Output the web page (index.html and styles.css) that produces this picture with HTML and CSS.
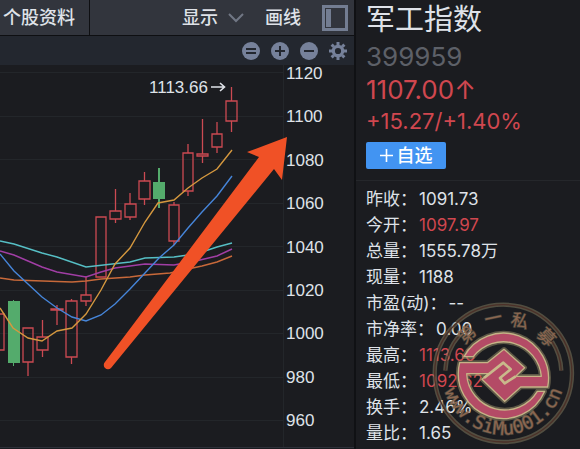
FILE: index.html
```html
<!DOCTYPE html>
<html lang="zh-CN">
<head>
  <meta charset="UTF-8">
  <meta name="viewport" content="width=device-width, initial-scale=1.0">
  <title>军工指数 399959</title>
  <link rel="stylesheet" href="styles.css">
</head>
<body>
  <main class="chart-panel">
    <nav class="toolbar">
      <button type="button" class="tool tab">个股资料</button>
      <button type="button" class="tool display">显示
        <svg width="16" height="10" viewBox="0 0 16 10"><path d="M1 1l7 7 7-7" fill="none" stroke="#717785" stroke-width="2"/></svg>
      </button>
      <button type="button" class="tool draw">画线</button>
      <button type="button" class="tool side" aria-label="侧栏">
        <svg width="26" height="26" viewBox="0 0 26 26"><path d="M1.5 1.5h23v23h-23z" fill="none" stroke="#737d92" stroke-width="3"/><path d="M4 4h5v18H4z" fill="#737d92"/></svg>
      </button>
    </nav>

    <div class="subbar">
      <button type="button" class="tool" aria-label="还原">
        <svg width="18" height="18" viewBox="0 0 18 18"><circle cx="9" cy="9" r="9" fill="#76819a"/><path d="M4 7h10M4 11h10" stroke="#23272f" stroke-width="2"/></svg>
      </button>
      <button type="button" class="tool" aria-label="放大">
        <svg width="18" height="18" viewBox="0 0 18 18"><circle cx="9" cy="9" r="9" fill="#76819a"/><path d="M4 9h10M9 4v10" stroke="#23272f" stroke-width="2"/></svg>
      </button>
      <button type="button" class="tool" aria-label="缩小">
        <svg width="18" height="18" viewBox="0 0 18 18"><circle cx="9" cy="9" r="9" fill="#76819a"/><path d="M4 9h10" stroke="#23272f" stroke-width="2"/></svg>
      </button>
      <button type="button" class="tool" aria-label="设置">
        <svg width="18" height="18" viewBox="0 0 18 18">
          <circle cx="9" cy="9" r="4.7" fill="none" stroke="#76819a" stroke-width="3.2"/>
          <path d="M9 0v3M9 15v3M0 9h3M15 9h3M2.6 2.6l2.2 2.2M13.2 13.2l2.2 2.2M2.6 15.4l2.2-2.2M13.2 4.8l2.2-2.2" stroke="#76819a" stroke-width="3"/>
        </svg>
      </button>
    </div>

    <div class="chart">
      <svg class="plot" viewBox="0 65 283 382">
        <path class="grid" d="M0 72.5H283M0 116.5H283M0 159.5H283M0 203.5H283M0 246.5H283M0 290.5H283M0 333.5H283M0 377.5H283M0 420.5H283M283.5 65V447"/>

        <!-- candles -->
        <path class="up" d="M231.5 87V101M231.5 121V132M217 122V134M217 147V153M202.5 119V154M202.5 156V163M188 144V153M188 191V196M174 202V205M174 241V245M144.5 172V181M144.5 199V205M130 193V204M130 217V220M115.5 189V211M115.5 219V223M86 276V295M86 301V306M71.5 299V301M71.5 357V364M57 305V325M42.5 320V337M42.5 350V357M28 362V376"/>
        <path class="up" d="M226 101h11v20h-11zM212 134h10v13h-10zM197 154h11v2h-11zM183 153h10v38h-10zM169 205h10v36h-10zM139 181h11v18h-11zM125 204h11v13h-11zM110 211h11v8h-11zM96 217h10v60h-10zM81 295h10v6h-10zM66 301h11v56h-11zM51 309h12v1h-12zM37 337h11v13h-11zM23 328h10v34h-10zM-7 314h11v36h-11z"/>
        <path class="down" d="M153 182h12v17h-12zM158 168h2v40h-2zM8 301h12v62h-12zM13 300h1v66h-1z"/>

        <!-- moving averages -->
        <polyline class="ma" stroke="#c8693a" points="0,278 14,280 72,282 86,281 101,279 130,277 145,275 170,273 188,269 202,266 217,262 232,256"/>
        <polyline class="ma" stroke="#a13ea5" points="0,251 14,255 42,267 57,272 86,277 101,272 115,268 145,264 174,265 200,260 217,256 232,249"/>
        <polyline class="ma" stroke="#56bfc5" points="0,241 14,244 42,253 57,257 86,267 130,262 145,258 174,257 188,255 202,252 217,247 232,243"/>
        <polyline class="ma" stroke="#4685d9" points="0,254 14,271 42,297 57,308 72,317 86,321 101,315 115,304 130,289 145,273 159,258 174,245 188,228 202,212 217,196 232,176"/>
        <polyline class="ma" stroke="#d5983f" points="0,308 13,328 28,338 42,341 57,331 72,328 86,314 101,290 115,264 130,248 145,222 158,203 174,200 188,188 202,178 217,169 232,150"/>

        <path fill="#f05126" d="M287 137L247 152L259 157L105 362A4 4 0 0 0 111 368L274 169L282 180Z"/>
        <text class="peak" x="149" y="93">1113.66</text>
        <path d="M211 87h13M220 83l4.500 4-4.500 4" fill="none" stroke="#dfe2e8" stroke-width="1.600"/>
      </svg>
      <div class="axis">
        <span>1120</span>
        <span>1100</span>
        <span>1080</span>
        <span>1060</span>
        <span>1040</span>
        <span>1020</span>
        <span>1000</span>
        <span>980</span>
        <span>960</span>
      </div>
    </div>
  </main>

  <aside class="quote">
    <header>
      <h1>军工指数</h1>
      <p class="code">399959</p>
      <p class="price">1107.00↑</p>
      <p class="change">+15.27/+1.40%</p>
      <button type="button" class="add"><svg width="13" height="13" viewBox="0 0 13 13"><path d="M0 6.500h13M6.500 0v13" stroke="#fff" stroke-width="1.600"/></svg>自选</button>
    </header>
    <dl>
      <div><dt>昨收：</dt><dd>1091.73</dd></div>
      <div><dt>今开：</dt><dd class="red">1097.97</dd></div>
      <div><dt>总量：</dt><dd>1555.78万</dd></div>
      <div><dt>现量：</dt><dd>1188</dd></div>
      <div><dt>市盈(动)：</dt><dd>--</dd></div>
      <div><dt>市净率：</dt><dd>0.00</dd></div>
      <div><dt>最高：</dt><dd class="red">1113.66</dd></div>
      <div><dt>最低：</dt><dd class="red">1092.62</dd></div>
      <div><dt>换手：</dt><dd>2.46%</dd></div>
      <div><dt>量比：</dt><dd>1.65</dd></div>
    </dl>

    <!-- site stamp -->
    <svg class="stamp" viewBox="0 0 432 432">
      <defs>
        <path id="ring-text" d="M30 214A184 184 0 0 0 398 214"/>
      </defs>
      <g fill="none">
        <g stroke="#8a7f62" stroke-opacity=".5" stroke-width="13">
          <circle cx="214" cy="214" r="206"/>
          <path d="M40 206A174 174 0 0 1 84 98M388 206A174 174 0 0 0 360 118"/>
        </g>
        <g stroke="#4c3028" stroke-width="4">
          <circle cx="214" cy="214" r="206"/>
          <path d="M40 206A174 174 0 0 1 84 98M388 206A174 174 0 0 0 360 118"/>
        </g>
      </g>
      <g class="stamp-text">
        <text transform="translate(106 98) rotate(-40)" y="17">第</text>
        <text transform="translate(184 50) rotate(-12)" y="17">一</text>
        <text transform="translate(263 58) rotate(14)" y="17">私</text>
        <text transform="translate(342 106) rotate(46)" y="17">募</text>
      </g>
      <text class="stamp-url"><textPath href="#ring-text" startOffset="50%">www.SiMu001.cn</textPath></text>
      <g transform="translate(66 60)" stroke-linejoin="round">
        <path d="M30 104A135 135 0 0 1 281 195H200L152 238L84 172L105 155H38A114 114 0 0 0 250 208H272A135 135 0 0 1 17 122H100L150 82L212 137L185 163H262A114 114 0 0 0 58 104Z" fill="none" stroke="#a0946e" stroke-opacity=".5" stroke-width="14"/>
        <path d="M30 104A135 135 0 0 1 281 195H200L152 238L84 172L105 155H38A114 114 0 0 0 250 208H272A135 135 0 0 1 17 122H100L150 82L212 137L185 163H262A114 114 0 0 0 58 104Z" fill="#b44b66" stroke="#c5b386" stroke-width="4"/>
        <path d="M90 168L148 122L170 142L138 168L152 184L185 163" fill="none" stroke="#c9b98b" stroke-width="8"/>
      </g>
    </svg>
  </aside>
</body>
</html>
```
FILE: styles.css
```css
* {
  box-sizing: border-box;
}

body {
  margin: 0;
  min-height: 100vh;
  display: flex;
  background-color: #1b1c20;
  color: #dfe2e8;
  font-family: Inter, "Noto Sans CJK SC", sans-serif;
}

h1, p, dl, dd {
  margin: 0;
}

button {
  border: 0;
  padding: 0;
  font-family: inherit;
  cursor: pointer;
}

svg {
  display: block;
}

/* chart side */
.chart-panel {
  flex: 1;
  min-width: 0;
  border-right: 2px solid #101114;
}

.toolbar {
  display: flex;
  align-items: center;
  height: 36px;
  padding-right: 6px;
  background-color: #32353d;
  border-bottom: 1px solid #0e0f12;
}

.tool {
  display: flex;
  align-items: center;
  background: none;
  color: #dfe2e8;
  font-size: 18px;
  font-weight: 500;
  line-height: 24px;
}

.tab {
  height: 100%;
  width: 90px;
  padding-left: 3px;
  border-right: 1px solid #0e0f12;
}

.display {
  gap: 10px;
  margin-left: auto;
}

.draw {
  margin: 0 21px;
}

.subbar {
  display: flex;
  align-items: center;
  justify-content: flex-end;
  gap: 11px;
  height: 29px;
  padding-right: 7px;
  background-color: #23272f;
}

.chart {
  display: flex;
  border-bottom: 1px solid #2d3039;
}

.plot {
  flex: 1;
  min-width: 0;
  overflow: visible;
}

.grid {
  fill: none;
  stroke: #23262a;
}

.up {
  fill: none;
  stroke: #cc4a52;
  stroke-width: 1.3;
}

.down {
  fill: #54ab6c;
}

.ma {
  fill: none;
  stroke-width: 1.4;
}

.peak {
  fill: #dfe2e8;
  font-family: "Liberation Sans", sans-serif;
  font-size: 17px;
}

.axis {
  display: flex;
  flex-direction: column;
  justify-content: space-between;
  width: 71px;
  padding: 0 0 17px 3px;
  font-family: "Liberation Sans", sans-serif;
  font-size: 17px;
  line-height: 18px;
}

/* quote side */
.quote {
  position: relative;
  width: 224px;
}

.quote header {
  padding: 0 10px 11px;
  border-bottom: 1px solid #25272b;
}

h1 {
  font-size: 29px;
  font-weight: 400;
  line-height: 40px;
}

.code,
.price {
  font-size: 26px;
  line-height: 33px;
}

.code {
  color: #5d6068;
}

.price,
.change,
.red {
  color: #d0474f;
}

.change {
  font-size: 22px;
  line-height: 30px;
}

.add {
  display: flex;
  align-items: center;
  justify-content: center;
  gap: 4px;
  width: 80px;
  height: 27px;
  margin-top: 6px;
  border-radius: 2px;
  background-color: #4294f2;
  color: #fff;
  font-size: 18px;
  font-weight: 500;
  line-height: 27px;
}

.quote dl {
  padding: 5px 10px 0;
  font-size: 17px;
  line-height: 26px;
}

.quote dl div {
  display: flex;
  gap: 2px;
}

.stamp {
  position: absolute;
  top: 302px;
  right: 4px;
  width: 144px;
}

.stamp-text,
.stamp-url {
  fill: #8a6650;
  stroke: #8a7f62;
  stroke-opacity: 0.4;
  stroke-width: 4;
  paint-order: stroke;
  text-anchor: middle;
}

.stamp-text {
  font-family: "Noto Sans CJK SC", sans-serif;
  font-size: 52px;
}

.stamp-url {
  font-family: "DejaVu Sans Mono", monospace;
  font-size: 56px;
}
```
